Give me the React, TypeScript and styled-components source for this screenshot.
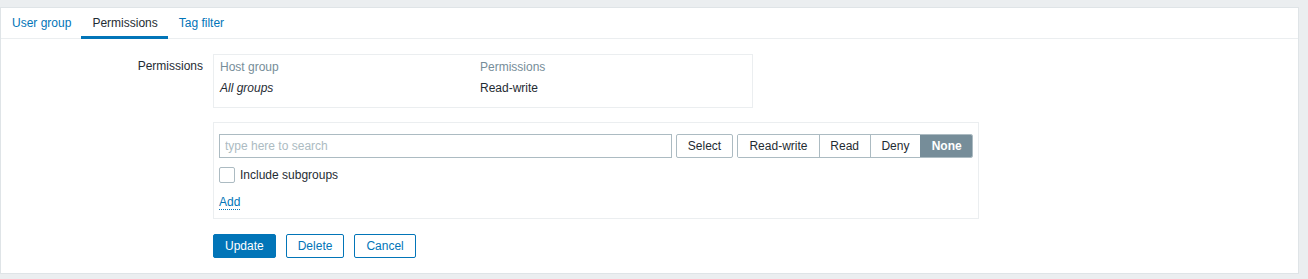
import React from "react";
import styled, { createGlobalStyle } from "styled-components";

const GlobalStyle = createGlobalStyle`
  html, body {
    margin: 0;
    padding: 0;
    background-color: #ebeef0;
    font-family: "Liberation Sans", Arial, sans-serif;
    font-size: 12px;
    color: #1f2c33;
  }
`;

const Page = styled.div`
  padding: 7px 9px 6px 0;
`;

const Panel = styled.div`
  background-color: #fff;
  border: 1px solid #dfe4e7;
`;

const TabBar = styled.div`
  display: flex;
  height: 30px;
  border-bottom: 1px solid #ebeef0;
`;

const Tab = styled.a<{ $active?: boolean }>`
  display: block;
  height: 31px;
  margin-bottom: -1px;
  box-sizing: border-box;
  padding: 1px 10px 0 11px;
  line-height: 29px;
  color: ${({ $active }) => ($active ? "#1f2c33" : "#0275b8")};
  border-bottom: 3px solid ${({ $active }) => ($active ? "#0275b8" : "transparent")};
  text-decoration: none;
  cursor: pointer;
`;

const Form = styled.div`
  display: grid;
  grid-template-columns: 202px 1fr;
  column-gap: 10px;
  padding: 15px 0 15px 0;
`;

const Label = styled.div`
  text-align: right;
  padding-top: 5px;
  line-height: 14px;
`;

const Field = styled.div`
  display: flex;
  flex-direction: column;
  align-items: flex-start;
`;

const TableBox = styled.div`
  width: 540px;
  box-sizing: border-box;
  border: 1px solid #ebeef0;
  padding: 2px 0 8px 0;
`;

const Table = styled.table`
  border-collapse: collapse;
  table-layout: fixed;
  width: 100%;

  th,
  td {
    padding: 3px 6px;
    line-height: 15px;
    text-align: left;
    font-weight: normal;
  }

  th {
    color: #768d99;
  }

  th:first-child {
    width: 248px;
  }
`;

const Italic = styled.td`
  font-style: italic;
`;

const AddBox = styled.div`
  margin-top: 14px;
  width: 766px;
  box-sizing: border-box;
  border: 1px solid #ebeef0;
  padding: 11px 5px 8px 5px;
`;

const SearchRow = styled.div`
  display: flex;
  align-items: center;
  gap: 4px;
`;

const SearchInput = styled.input`
  width: 455px;
  height: 24px;
  box-sizing: border-box;
  border: 1px solid #acbbc2;
  padding: 0 5px;
  font-family: inherit;
  font-size: 12px;
  color: #1f2c33;
  outline: none;

  &::placeholder {
    color: #acbbc2;
  }
`;

const GrayButton = styled.button`
  height: 24px;
  box-sizing: border-box;
  padding: 0 11px;
  border: 1px solid #acbbc2;
  border-radius: 2px;
  background-color: #fff;
  font-family: inherit;
  font-size: 12px;
  color: #1f2c33;
  cursor: pointer;
`;

const RadioGroup = styled.div`
  display: flex;
  height: 24px;
  border: 1px solid #acbbc2;
  border-radius: 2px;
  box-sizing: border-box;
  overflow: hidden;
`;

const Segment = styled.label<{ $checked?: boolean; $width: number }>`
  width: ${({ $width }) => $width}px;
  box-sizing: border-box;
  text-align: center;
  line-height: 22px;
  border-left: 1px solid ${({ $checked }) => ($checked ? "#768d99" : "#acbbc2")};
  background-color: ${({ $checked }) => ($checked ? "#768d99" : "#fff")};
  color: ${({ $checked }) => ($checked ? "#fff" : "#1f2c33")};
  font-weight: ${({ $checked }) => ($checked ? "bold" : "normal")};
  cursor: pointer;

  &:first-child {
    border-left: none;
  }
`;

const CheckRow = styled.label`
  display: flex;
  align-items: center;
  gap: 5px;
  margin-top: 9px;
  line-height: 16px;
`;

const CheckBox = styled.span`
  width: 16px;
  height: 16px;
  box-sizing: border-box;
  border: 1px solid #acbbc2;
  border-radius: 2px;
  background-color: #fff;
`;

const AddLink = styled.a`
  display: inline-block;
  margin-top: 13px;
  line-height: 13px;
  color: #0275b8;
  border-bottom: 1px dotted #0275b8;
  text-decoration: none;
  cursor: pointer;
`;

const Buttons = styled.div`
  display: flex;
  gap: 10px;
  margin-top: 15px;
`;

const Button = styled.button<{ $primary?: boolean }>`
  height: 24px;
  box-sizing: border-box;
  padding: 0 11px;
  border: 1px solid #0275b8;
  border-radius: 2px;
  background-color: ${({ $primary }) => ($primary ? "#0275b8" : "#fff")};
  color: ${({ $primary }) => ($primary ? "#fff" : "#0275b8")};
  font-family: inherit;
  font-size: 12px;
  cursor: pointer;
`;

const levels = [
  { name: "Read-write", width: 81 },
  { name: "Read", width: 51 },
  { name: "Deny", width: 51 },
  { name: "None", width: 52 },
];

export default function App() {
  return (
    <>
      <GlobalStyle />
      <Page>
        <Panel>
          <TabBar>
            <Tab>User group</Tab>
            <Tab $active>Permissions</Tab>
            <Tab>Tag filter</Tab>
          </TabBar>
          <Form>
            <Label>Permissions</Label>
            <Field>
              <TableBox>
                <Table>
                  <thead>
                    <tr>
                      <th>Host group</th>
                      <th>Permissions</th>
                    </tr>
                  </thead>
                  <tbody>
                    <tr>
                      <Italic>All groups</Italic>
                      <td>Read-write</td>
                    </tr>
                  </tbody>
                </Table>
              </TableBox>
              <AddBox>
                <SearchRow>
                  <SearchInput placeholder="type here to search" />
                  <GrayButton>Select</GrayButton>
                  <RadioGroup>
                    {levels.map((l) => (
                      <Segment key={l.name} $width={l.width} $checked={l.name === "None"}>
                        {l.name}
                      </Segment>
                    ))}
                  </RadioGroup>
                </SearchRow>
                <CheckRow>
                  <CheckBox />
                  Include subgroups
                </CheckRow>
                <AddLink>Add</AddLink>
              </AddBox>
              <Buttons>
                <Button $primary>Update</Button>
                <Button>Delete</Button>
                <Button>Cancel</Button>
              </Buttons>
            </Field>
          </Form>
        </Panel>
      </Page>
    </>
  );
}
